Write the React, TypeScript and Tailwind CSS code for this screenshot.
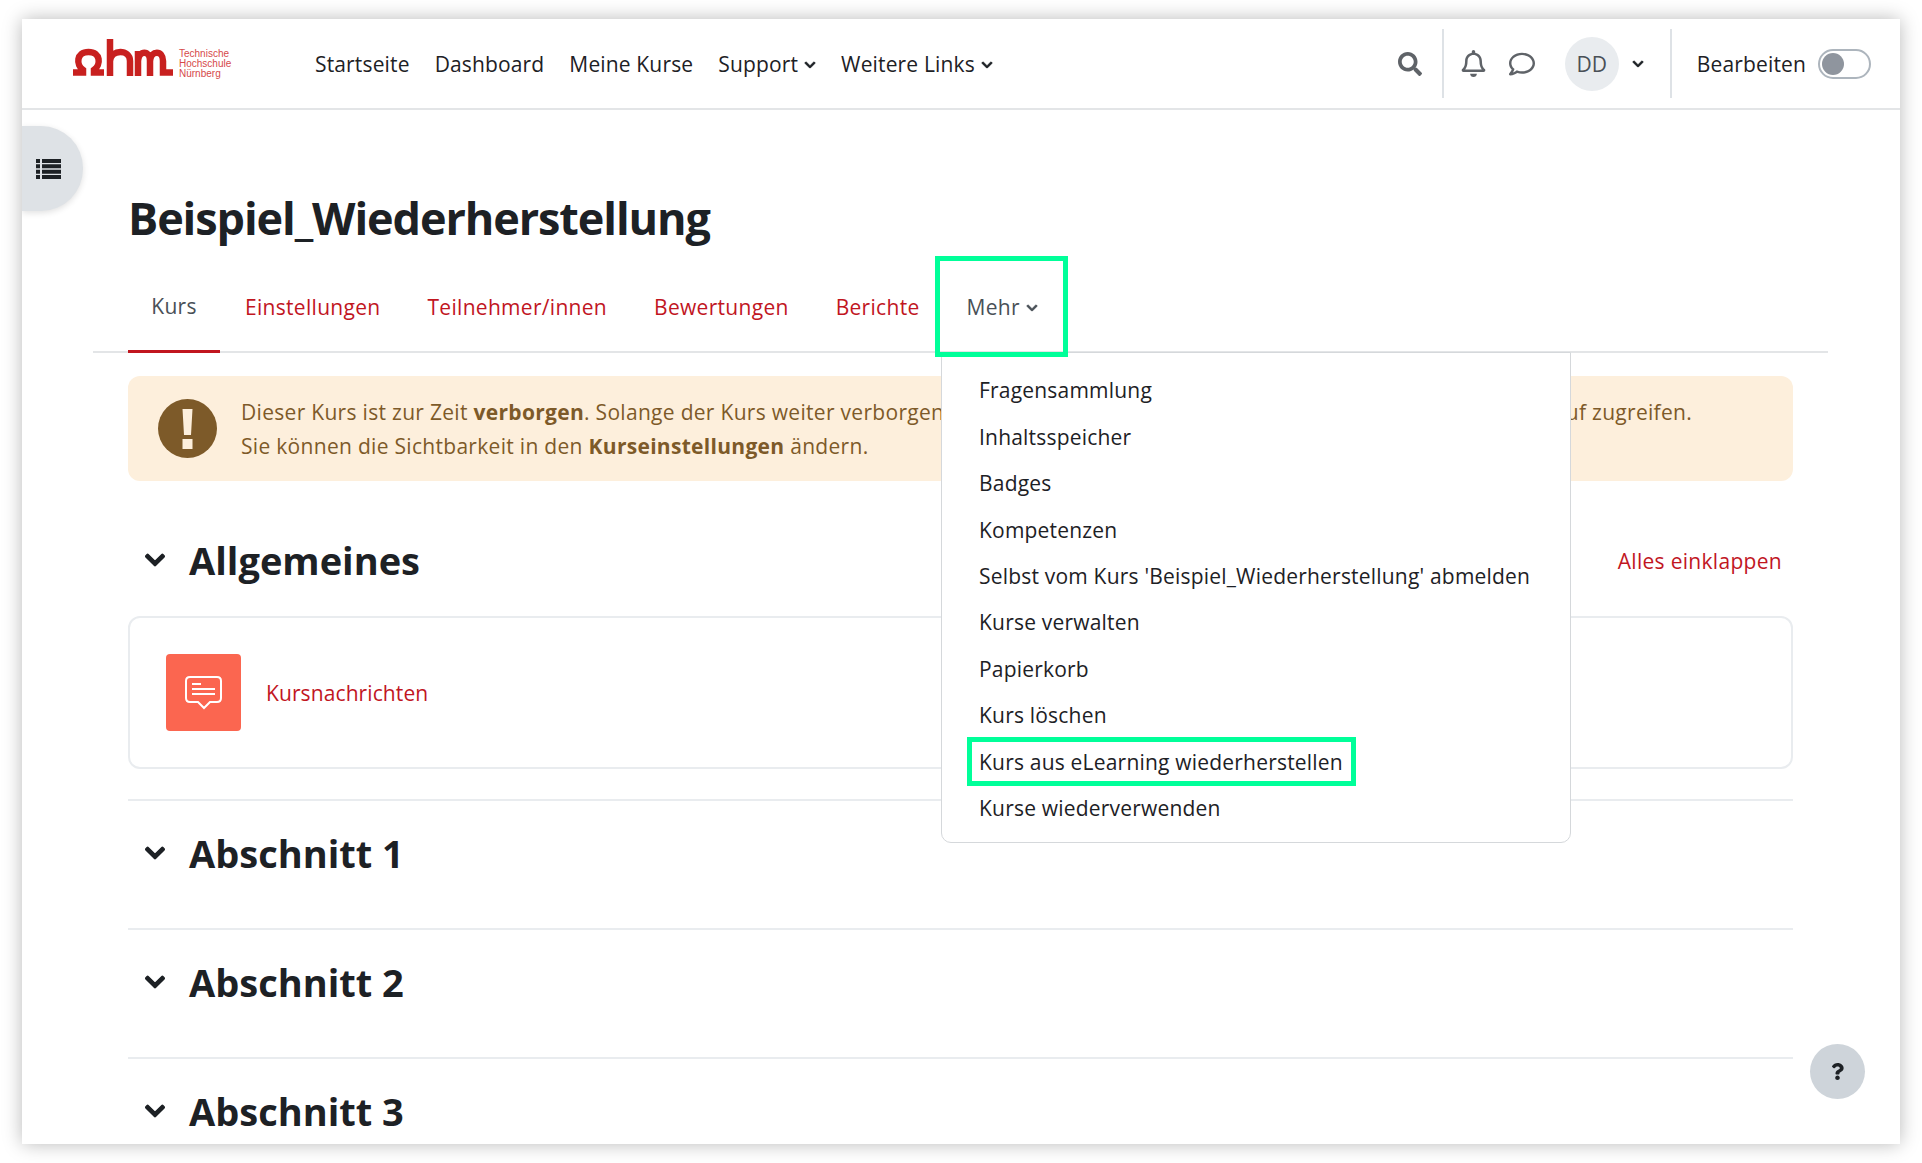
import { FaChevronDown, FaQuestion, FaRegBell, FaRegComment, FaSearch } from 'react-icons/fa'

const navLinks = ['Startseite', 'Dashboard', 'Meine Kurse']
const tabs = ['Einstellungen', 'Teilnehmer/innen', 'Bewertungen', 'Berichte']
const menuItems = [
  'Fragensammlung',
  'Inhaltsspeicher',
  'Badges',
  'Kompetenzen',
  "Selbst vom Kurs 'Beispiel_Wiederherstellung' abmelden",
  'Kurse verwalten',
  'Papierkorb',
  'Kurs löschen',
  'Kurs aus eLearning wiederherstellen',
  'Kurse wiederverwenden',
]

const Chevron = ({ className }: { className: string }) => (
  <FaChevronDown className={className} stroke="currentColor" strokeWidth={30} />
)

const Logo = () => (
  <div className="flex items-center gap-[6px] w-[158px] h-[40px]">
    <svg width="100" height="37" viewBox="0 0 100 37" fill="none" stroke="#c8201f" strokeWidth="6.5" className="shrink-0 mb-[12px]">
      <path d="M0 33.5 H10 V31 C3 26 3 13 15.5 13 C28 13 28 26 21 31 V33.5 H31" />
      <path d="M37 0 V37 M37 22 C38 10 57 10 57 22 V37" />
      <path d="M65 37 V12 M65 22 C66 11 77 11 77 22 V37 M77 22 C78 11 90 11 90 22 V33.5 H100" />
    </svg>
    <div className="text-[10px] leading-[10px] tracking-normal text-[#d6494a] font-['Liberation_Sans',sans-serif]">
      <div>Technische</div>
      <div>Hochschule</div>
      <div>Nürnberg</div>
    </div>
  </div>
)

const SectionHeading = ({ title }: { title: string }) => (
  <div className="flex items-center h-[50px] pl-[16px] gap-[23px]">
    <Chevron className="text-[#1d2125] w-[22px] h-[22px]" />
    <h3 className="text-[38px] leading-[50px] font-bold text-[#1d2125]">{title}</h3>
  </div>
)

const SectionRow = ({ title }: { title: string }) => (
  <div className="border-b-2 border-[#e9ecef] h-[129px] pt-[27px] last:border-b-0">
    <SectionHeading title={title} />
  </div>
)

export default function App() {
  return (
    <div className="w-[1922px] h-[1163px] bg-white pt-[19px] pl-[22px] overflow-hidden font-['Open_Sans',sans-serif]">
      <div className="relative w-[1878px] h-[1125px] bg-white overflow-hidden shadow-[0_0_18px_rgba(0,0,0,0.28)] text-[#1d2125]">
        <header className="flex items-center h-[91px] border-b-2 border-[#e3e5e7] pl-[51px] text-[21px] tracking-[0.15px]">
          <Logo />
          <nav className="flex items-center gap-[25px] ml-[84px] pt-[2px]">
            {navLinks.map((link) => (
              <a key={link}>{link}</a>
            ))}
            <a className="flex items-center gap-[6px]">
              Support <Chevron className="w-[12px] h-[12px]" />
            </a>
            <a className="flex items-center gap-[6px]">
              Weitere Links <Chevron className="w-[12px] h-[12px]" />
            </a>
          </nav>
          <div className="ml-auto flex items-center h-full">
            <FaSearch className="w-[24px] h-[24px] text-[#5f6368] mr-[20px]" />
            <div className="w-[2px] h-[69px] bg-[#dee2e6]" />
            <FaRegBell className="w-[25px] h-[27px] text-[#5f6368] ml-[17px]" />
            <FaRegComment className="w-[26px] h-[26px] text-[#5f6368] ml-[23px]" />
            <div className="w-[54px] h-[54px] rounded-full bg-[#e9ecef] flex items-center justify-center ml-[30px] pt-[2px] text-[#495057]">
              DD
            </div>
            <Chevron className="w-[12px] h-[12px] ml-[13px]" />
            <div className="w-[2px] h-[69px] bg-[#dee2e6] ml-[26px]" />
            <span className="ml-[25px] pt-[2px]">Bearbeiten</span>
            <div className="ml-[12px] mr-[29px] w-[53px] h-[30px] rounded-full border-2 border-[#adb5bd] p-[2px]">
              <div className="w-[22px] h-[22px] rounded-full bg-[#8f959e]" />
            </div>
          </div>
        </header>

        <button className="absolute left-0 top-[107px] w-[61px] h-[85px] bg-[#dee2e6] rounded-r-[42px] flex items-center pl-[14px] shadow-[0_2px_6px_rgba(0,0,0,0.12)]">
          <svg width="25" height="20" viewBox="0 0 25 20" fill="#1d2125">
            <path d="M0 0h4v4H0zM6 0h19v4H6zM0 5.3h4v4H0zM6 5.3h19v4H6zM0 10.7h4v4H0zM6 10.7h19v4H6zM0 16h4v4H0zM6 16h19v4H6z" />
          </svg>
        </button>

        <main className="pl-[106px] pr-[107px]">
          <h1 className="pt-[80px] text-[45px] leading-[56px] font-bold tracking-[-1.1px]">Beispiel_Wiederherstellung</h1>

          <div className="mt-[16px] -mx-[35px] px-[35px] h-[91px] border-b-2 border-[#e3e5e7] flex text-[21px] tracking-[0.3px] text-[#c1161f]">
            <a className="w-[92px] h-[91px] border-b-[3px] border-[#c1161f] flex items-center justify-center pt-[2px] text-[#495057]">
              Kurs
            </a>
            <div className="flex items-center gap-[47px] ml-[25px] h-[91px]">
              {tabs.map((tab) => (
                <a key={tab}>{tab}</a>
              ))}
              <a className="flex items-center gap-[6px] text-[#495057]">
                Mehr <Chevron className="w-[12px] h-[12px]" />
              </a>
            </div>
          </div>

          <div className="mt-[23px] h-[105px] rounded-[12px] bg-[#fdefdc] flex items-center pl-[30px] text-[#7d5a29] text-[21px] tracking-[0.3px] leading-[34px]">
            <svg width="59" height="59" viewBox="0 0 59 59" className="shrink-0">
              <circle cx="29.5" cy="29.5" r="29.5" fill="#7d5a29" />
              <path d="M24.5 10h10l-1.5 26h-7z M24.5 40h10v10h-10z" fill="#fdefdc" />
            </svg>
            <div className="ml-[24px] whitespace-nowrap">
              <p>
                Dieser Kurs ist zur Zeit <b>verborgen</b>. Solange der Kurs weiter verborgen bleibt, können Teilnehmer/innen nichts sehen und nicht darauf zugreifen.
              </p>
              <p>
                Sie können die Sichtbarkeit in den <b>Kurseinstellungen</b> ändern.
              </p>
            </div>
          </div>

          <div className="mt-[54px] flex items-center justify-between pr-[11px]">
            <SectionHeading title="Allgemeines" />
            <a className="pt-[4px] text-[21px] tracking-[0.3px] text-[#c1161f]">Alles einklappen</a>
          </div>

          <div className="mt-[31px] mb-[30px] h-[153px] rounded-[12px] border-2 border-[#e9ecef] flex items-center pl-[36px] gap-[25px]">
            <div className="w-[75px] h-[77px] rounded-[4px] bg-[#fb6650] flex items-center justify-center">
              <svg width="38" height="38" viewBox="0 0 38 38" fill="none" stroke="white" strokeWidth="2">
                <path d="M5 3 H32 Q36 3 36 7 V24 Q36 28 32 28 H25 L19 34 L13 28 H5 Q1 28 1 24 V7 Q1 3 5 3 Z" />
                <path d="M7 10 H16 M7 15 H30 M7 20 H30" />
              </svg>
            </div>
            <a className="pt-[2px] text-[21px] tracking-[0.1px] text-[#c1161f]">Kursnachrichten</a>
          </div>

          <div className="border-t-2 border-[#e9ecef]">
            <SectionRow title="Abschnitt 1" />
            <SectionRow title="Abschnitt 2" />
            <SectionRow title="Abschnitt 3" />
          </div>
        </main>

        <div className="absolute left-[919px] top-[333px] w-[630px] h-[491px] bg-white border border-[#d5d8db] rounded-b-[10px] pt-[15px] pl-[37px] text-[21px] tracking-[0.2px]">
          {menuItems.map((item) => (
            <div key={item} className="h-[46.4px] flex items-center whitespace-nowrap">
              {item}
            </div>
          ))}
        </div>

        <div className="absolute left-[913px] top-[237px] w-[133px] h-[101px] border-[5px] border-[#00ff99]" />
        <div className="absolute left-[945px] top-[718px] w-[389px] h-[49px] border-[5px] border-[#00ff99]" />

        <div className="absolute left-[1788px] top-[1025px] w-[55px] h-[55px] rounded-full bg-[#ced4da] flex items-center justify-center">
          <FaQuestion className="w-[17px] h-[17px] text-[#1d2125]" />
        </div>
      </div>
    </div>
  )
}
